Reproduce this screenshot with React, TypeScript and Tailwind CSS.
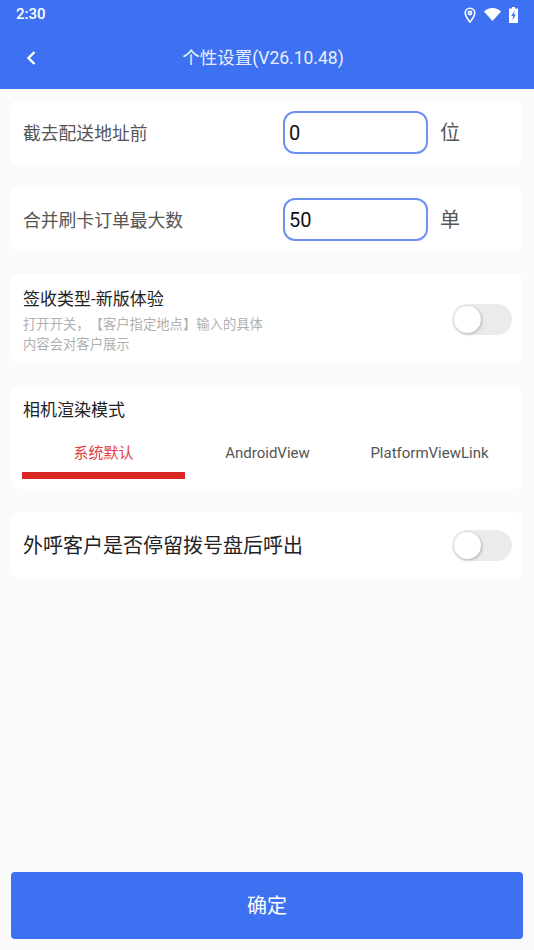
const cjk = "font-['Roboto','Noto_Sans_CJK_SC',sans-serif]";

function Toggle() {
  return (
    <div className="w-[60px] h-[31px] rounded-full bg-[#ebebeb] flex items-center pl-[2px] shrink-0">
      <div className="w-[27px] h-[27px] rounded-full bg-white shadow-[1px_1px_3px_rgba(0,0,0,0.25)]"></div>
    </div>
  );
}

function InputRow({ label, value, unit }: { label: string; value: string; unit: string }) {
  return (
    <section className="h-[65px] bg-white rounded-lg flex items-center pl-3">
      <div className="w-[260px] pt-[3px] text-[17.8px] text-[#555]">{label}</div>
      <div className="w-[145px] h-[43px] border-2 border-[#6a92ee] rounded-xl flex items-center pl-1 text-[20px] text-[#111]">
        {value}
      </div>
      <div className="ml-3 text-[20px] text-[#555]">{unit}</div>
    </section>
  );
}

export default function App() {
  return (
    <main className={`${cjk} w-[534px] h-[950px] bg-[#fafafa] flex flex-col overflow-hidden`}>
      <header className="h-[89px] bg-[#3e71f1] text-white shrink-0">
        <div className="h-[29px] flex items-center justify-between pl-4 pr-4">
          <span className="text-[15px] font-medium">2:30</span>
          <div className="flex items-center gap-2">
            <svg width="12" height="16" viewBox="0 0 12 16" fill="none" stroke="white" strokeWidth="1.6">
              <path d="M6 15C3.5 11.6 1.2 9 1.2 6a4.8 4.8 0 0 1 9.6 0c0 3-2.300 5.600-4.800 9Z" />
              <circle cx="6" cy="6" r="1.600" />
            </svg>
            <svg width="17" height="13" viewBox="0 0 17 13" fill="white">
              <path d="M0 3.500C2.200 1.300 5.200 0 8.500 0S14.800 1.300 17 3.500L8.500 13Z" />
            </svg>
            <svg width="9" height="16" viewBox="0 0 9 16" fill="white">
              <path d="M3 0h3v1.500h3V16H0V1.500h3Z" />
              <path d="M5.800 3.500 2.200 9h2L3.400 13.500 6.900 7.500H4.900Z" fill="#3e71f1" />
            </svg>
          </div>
        </div>
        <div className="relative h-[60px] flex items-center justify-center">
          <svg className="absolute left-[25px] top-[20px]" width="12" height="18" viewBox="0 0 12 18" fill="none" stroke="white" strokeWidth="2.400">
            <path d="M9.500 3 3.500 9l6 6" />
          </svg>
          <h1 className="pr-2 pb-[2px] text-[17.500px] text-[#e8eeff]">个性设置(V26.10.48)</h1>
        </div>
      </header>

      <div className="flex-1 px-[11px] pt-[11px] flex flex-col gap-[22px]">
        <InputRow label="截去配送地址前" value="0" unit="位" />
        <InputRow label="合并刷卡订单最大数" value="50" unit="单" />

        <section className="h-[90px] bg-white rounded-lg flex items-center justify-between pl-3 pr-[11px]">
          <div className="pt-[3px]">
            <div className="text-[17px] leading-6 text-[#222]">签收类型-新版体验</div>
            <p className="mt-1 text-[13.33px] leading-[20px] text-[#b0b0b0] [text-spacing-trim:space-all]">
              打开开关，【客户指定地点】输入的具体
              <br />
              内容会对客户展示
            </p>
          </div>
          <Toggle />
        </section>

        <section className="h-[102px] mt-px bg-white rounded-lg px-[11px] pt-[11px]">
          <div className="pl-px text-[17px] leading-6 text-[#222]">相机渲染模式</div>
          <div className="mt-[17px] flex">
            <div className="w-[163px] text-center">
              <div className="h-[29px] leading-[29px] text-[15px] text-[#e54040]">系统默认</div>
              <div className="mt-1 h-[7px] bg-[#d92622]"></div>
            </div>
            <div className="w-[163px] pl-[2px] h-[29px] leading-[29px] text-center text-[15px] text-[#555]">AndroidView</div>
            <div className="w-[163px] h-[29px] leading-[29px] text-center text-[15px] text-[#555]">PlatformViewLink</div>
          </div>
        </section>

        <section className="h-[67px] mt-px bg-white rounded-lg flex items-center justify-between pl-3 pr-[11px]">
          <div className="text-[20px] text-[#222]">外呼客户是否停留拨号盘后呼出</div>
          <Toggle />
        </section>
      </div>

      <div className="px-[11px] pb-[11px] shrink-0">
        <button className="w-full h-[67px] bg-[#3e71f1] rounded text-white text-[20px]">确定</button>
      </div>
    </main>
  );
}
